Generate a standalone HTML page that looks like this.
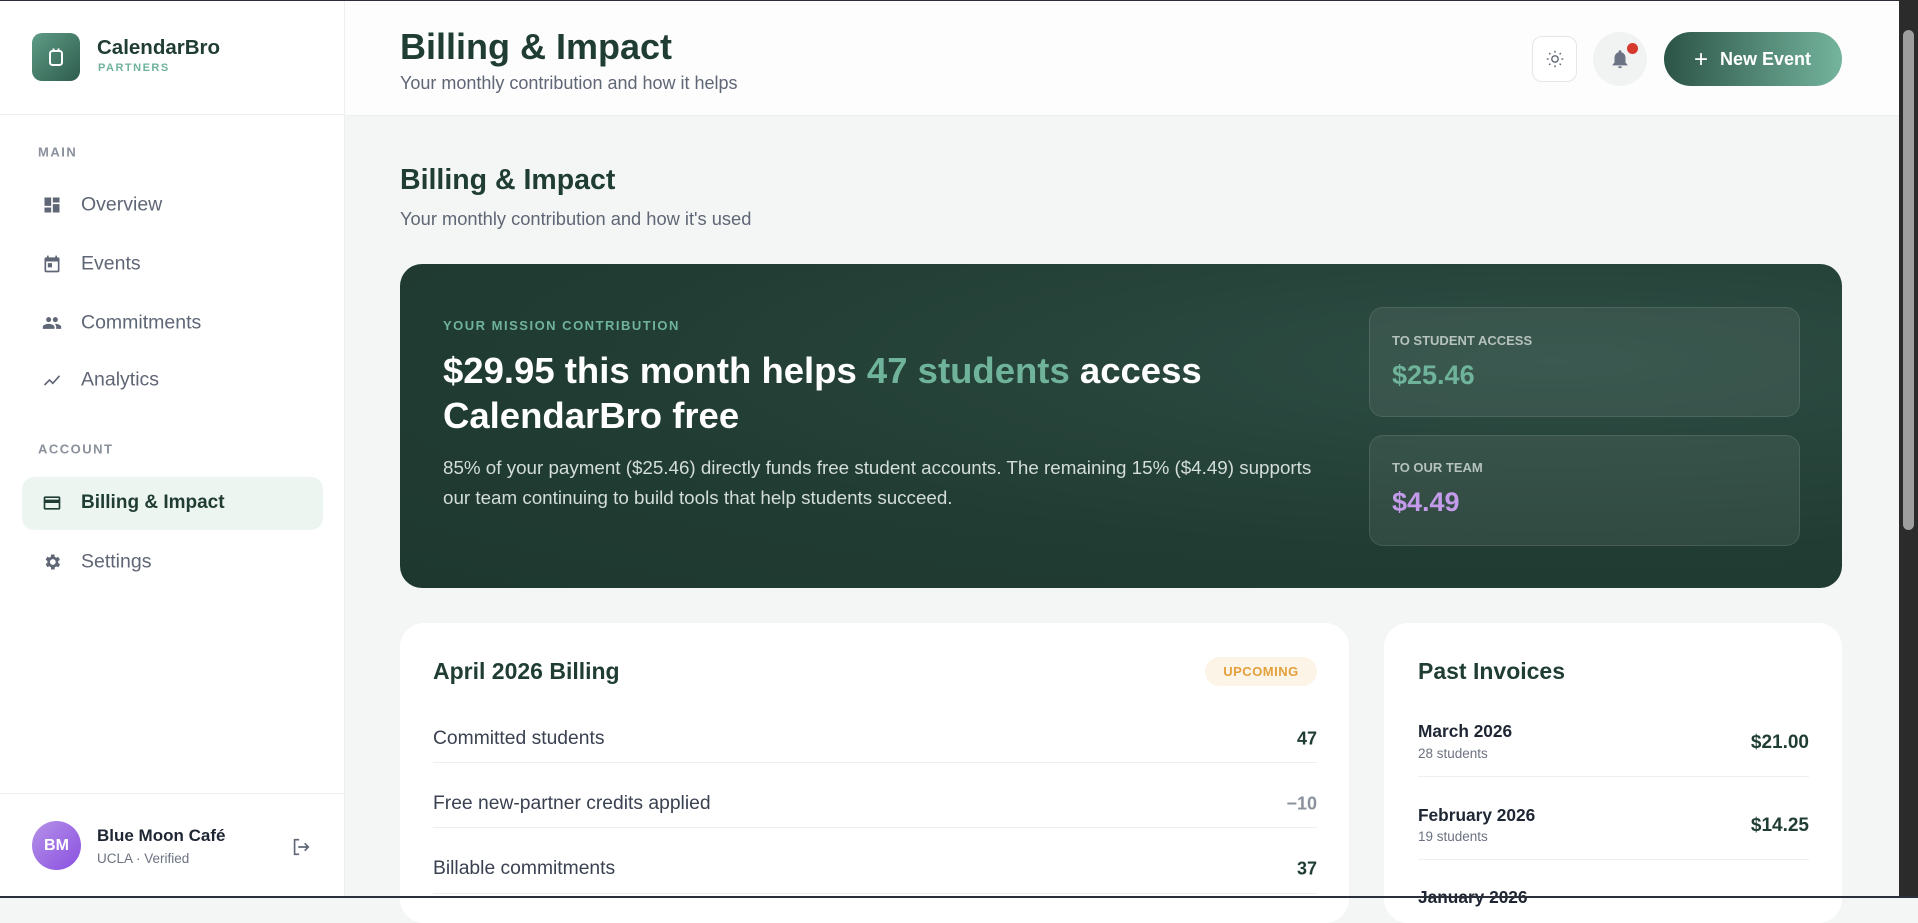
<!DOCTYPE html>
<html><head><meta charset="utf-8"><style>
*{box-sizing:border-box;margin:0;padding:0}
body{width:1918px;height:898px;overflow:hidden;font-family:"Liberation Sans",sans-serif;background:#f4f6f5;position:relative;color:#1f3d33}
.a{position:absolute;white-space:nowrap}
#top{left:0;top:0;width:1918px;height:1px;background:#2a2f3a}
#side{left:0;top:1px;width:345px;height:897px;background:#fff;border-right:1px solid #eef0ef}
#hdr{left:345px;top:1px;width:1554px;height:115px;background:#fdfdfd;border-bottom:1px solid #eef0ef}
.nav{left:81px;font-size:19.5px;color:#5f6675;transform:translateY(-50%)}
.ic{left:42px;width:20px;height:20px;transform:translateY(-50%)}
.lab{left:38px;font-size:13px;font-weight:bold;letter-spacing:1.5px;color:#8a909c;transform:translateY(-50%)}
.row{font-size:19.3px;color:#3a4150;transform:translateY(-50%)}
.val{font-size:18px;font-weight:bold;transform:translateY(-50%);text-align:right}
.hr{height:1px;background:#eef0ef}
</style></head><body>
<div class="a" id="top"></div>
<div class="a" id="side"></div>
<div class="a" id="hdr"></div>
<div class="a" style="left:32px;top:33px;width:48px;height:48px;border-radius:10px;background:linear-gradient(135deg,#5e9c86,#2e5c4c)"></div>
<svg class="a" style="left:44px;top:45px" width="24" height="24" viewBox="0 0 24 24"><rect x="6" y="6" width="12" height="14" rx="2.5" fill="none" stroke="#fff" stroke-width="2"/><rect x="8.5" y="3.5" width="2" height="3.5" fill="#fff"/><rect x="13.5" y="3.5" width="2" height="3.5" fill="#fff"/></svg>
<div class="a" style="left:97px;top:36px;font-size:20.5px;font-weight:bold;color:#1f3d33">CalendarBro</div>
<div class="a" style="left:98px;top:62px;font-size:11px;font-weight:bold;letter-spacing:1.5px;color:#6fb39a">PARTNERS</div>
<div class="a hr" style="left:0;top:114px;width:345px"></div>
<div class="a lab" style="top:152px">MAIN</div>
<svg class="a ic" style="top:205px" viewBox="0 0 24 24" fill="#5f6675"><path d="M3 13h8V3H3zm0 8h8v-6H3zm10 0h8V11h-8zm0-18v6h8V3z"/></svg>
<div class="a nav" style="top:205px">Overview</div>
<svg class="a ic" style="top:264px" viewBox="0 0 24 24" fill="#5f6675"><path d="M19 4h-1V2h-2v2H8V2H6v2H5a2 2 0 0 0-2 2v14a2 2 0 0 0 2 2h14a2 2 0 0 0 2-2V6a2 2 0 0 0-2-2zm0 16H5V9h14zM7 11h5v5H7z"/></svg>
<div class="a nav" style="top:264px">Events</div>
<svg class="a ic" style="top:323px" viewBox="0 0 24 24" fill="#5f6675"><path d="M16 11c1.7 0 3-1.3 3-3s-1.3-3-3-3-3 1.3-3 3 1.3 3 3 3zm-8 0c1.7 0 3-1.3 3-3S9.7 5 8 5 5 6.3 5 8s1.3 3 3 3zm0 2c-2.3 0-7 1.2-7 3.5V19h14v-2.5C15 14.2 10.3 13 8 13zm8 0h-1c1.2.8 2 2 2 3.5V19h6v-2.5c0-2.3-4.7-3.5-7-3.5z"/></svg>
<div class="a nav" style="top:323px">Commitments</div>
<svg class="a ic" style="top:380px" viewBox="0 0 24 24" fill="none" stroke="#5f6675" stroke-width="2"><path d="M3 18l6-6 4 4 8-9"/></svg>
<div class="a nav" style="top:380px">Analytics</div>
<div class="a lab" style="top:449px">ACCOUNT</div>
<div class="a" style="left:22px;top:477px;width:301px;height:53px;border-radius:12px;background:#edf5f1"></div>
<svg class="a ic" style="top:503px" viewBox="0 0 24 24" fill="#1f3d33"><path d="M20 4H4a2 2 0 0 0-2 2v12a2 2 0 0 0 2 2h16a2 2 0 0 0 2-2V6a2 2 0 0 0-2-2zm0 14H4v-6h16zm0-10H4V6h16z"/></svg>
<div class="a nav" style="top:503px;color:#1f3d33;font-weight:bold;font-size:19px">Billing &amp; Impact</div>
<svg class="a ic" style="top:562px" viewBox="0 0 24 24" fill="#5f6675"><path d="M19.4 13a7.5 7.5 0 0 0 0-2l2.1-1.6-2-3.5-2.5 1a7 7 0 0 0-1.7-1L15 3h-4l-.4 2.7a7 7 0 0 0-1.7 1l-2.5-1-2 3.5L6.5 11a7.5 7.5 0 0 0 0 2l-2.1 1.6 2 3.5 2.5-1a7 7 0 0 0 1.7 1L11 21h4l.4-2.7a7 7 0 0 0 1.7-1l2.5 1 2-3.5zM13 15.5a3.5 3.5 0 1 1 0-7 3.5 3.5 0 0 1 0 7z"/></svg>
<div class="a nav" style="top:562px">Settings</div>
<div class="a hr" style="left:0;top:793px;width:345px"></div>
<div class="a" style="left:32px;top:821px;width:49px;height:49px;border-radius:50%;background:linear-gradient(135deg,#b592e8,#8a4fe0);color:#fff;font-weight:bold;font-size:16px;text-align:center;line-height:49px">BM</div>
<div class="a" style="left:97px;top:826px;font-size:17px;font-weight:bold;color:#1e2633">Blue Moon Café</div>
<div class="a" style="left:97px;top:851px;font-size:13.5px;color:#6b7280">UCLA · Verified</div>
<svg class="a" style="left:290px;top:836px" width="22" height="22" viewBox="0 0 24 24" fill="none" stroke="#5f6675" stroke-width="1.8"><path d="M10 4H5v16h5M9 12h11M16 8l4 4-4 4"/></svg>
<div class="a" style="left:400px;top:26px;font-size:36px;font-weight:bold;color:#1f3d33">Billing &amp; Impact</div>
<div class="a" style="left:400px;top:73px;font-size:18px;color:#5f6675">Your monthly contribution and how it helps</div>
<div class="a" style="left:1532px;top:36px;width:45px;height:46px;border:1px solid #e4e7e6;border-radius:10px;background:#fff"></div>
<svg class="a" style="left:1544px;top:48px" width="22" height="22" viewBox="0 0 24 24" fill="none" stroke="#5f6675" stroke-width="1.5"><circle cx="12" cy="12" r="3.5"/><path d="M12 3v2M12 19v2M3 12h2M19 12h2M5.6 5.6l1.4 1.4M17 17l1.4 1.4M5.6 18.4L7 17M17 7l1.4-1.4"/></svg>
<div class="a" style="left:1593px;top:32px;width:54px;height:54px;border-radius:50%;background:#f1f3f2"></div>
<svg class="a" style="left:1609px;top:47px" width="22" height="24" viewBox="0 0 24 24" fill="#6b7385"><path d="M12 22a2 2 0 0 0 2-2h-4a2 2 0 0 0 2 2zm6-6v-5c0-3.1-1.6-5.6-4.5-6.3V4a1.5 1.5 0 0 0-3 0v.7C7.6 5.4 6 7.9 6 11v5l-2 2v1h16v-1z"/></svg>
<div class="a" style="left:1627px;top:43px;width:11px;height:11px;border-radius:50%;background:#d63a2f"></div>
<div class="a" style="left:1664px;top:32px;width:178px;height:54px;border-radius:27px;background:linear-gradient(90deg,#2c5447,#74b49d);color:#fff;font-size:18px;font-weight:bold;line-height:54px;padding-left:30px"><span style="font-weight:normal;font-size:24px;vertical-align:-2px;margin-right:12px">+</span>New Event</div>
<div class="a" style="left:400px;top:164px;font-size:28.5px;font-weight:bold;color:#1f3d33">Billing &amp; Impact</div>
<div class="a" style="left:400px;top:208px;font-size:18.3px;color:#5f6675">Your monthly contribution and how it's used</div>
<div class="a" style="left:400px;top:264px;width:1442px;height:324px;border-radius:22px;background:radial-gradient(ellipse at 80% 30%,#2d4d43,#213c33 60%,#1e3830)"></div>
<div class="a" style="left:443px;top:318px;font-size:13px;font-weight:bold;letter-spacing:1.5px;color:#6fb39a">YOUR MISSION CONTRIBUTION</div>
<div class="a" style="left:443px;top:348px;font-size:36.5px;font-weight:bold;color:#fff;line-height:45px">$29.95 this month helps <span style="color:#6fb39a">47 students</span> access<br>CalendarBro free</div>
<div class="a" style="left:443px;top:453px;font-size:18.8px;color:#d3ddd9;line-height:30px">85% of your payment ($25.46) directly funds free student accounts. The remaining 15% ($4.49) supports<br>our team continuing to build tools that help students succeed.</div>
<div class="a" style="left:1369px;top:307px;width:431px;height:110px;border-radius:14px;background:rgba(255,255,255,.07);border:1px solid rgba(255,255,255,.1)"></div>
<div class="a" style="left:1392px;top:333px;font-size:13px;font-weight:bold;color:#b5c2bd">TO STUDENT ACCESS</div>
<div class="a" style="left:1392px;top:360px;font-size:27px;font-weight:bold;color:#6fb39a">$25.46</div>
<div class="a" style="left:1369px;top:435px;width:431px;height:111px;border-radius:14px;background:rgba(255,255,255,.07);border:1px solid rgba(255,255,255,.1)"></div>
<div class="a" style="left:1392px;top:460px;font-size:13px;font-weight:bold;color:#b5c2bd">TO OUR TEAM</div>
<div class="a" style="left:1392px;top:487px;font-size:27px;font-weight:bold;color:#c39bea">$4.49</div>
<div class="a" style="left:400px;top:623px;width:949px;height:300px;border-radius:24px;background:#fff"></div>
<div class="a" style="left:433px;top:658px;font-size:23px;font-weight:bold;color:#1f3d33">April 2026 Billing</div>
<div class="a" style="left:1205px;top:657px;width:112px;height:29px;border-radius:15px;background:#fdf4e8;color:#e3a03c;font-size:13px;font-weight:bold;text-align:center;line-height:29px;letter-spacing:.5px">UPCOMING</div>
<div class="a row" style="left:433px;top:739px">Committed students</div>
<div class="a val" style="right:601px;top:739px">47</div>
<div class="a hr" style="left:433px;top:762px;width:884px"></div>
<div class="a row" style="left:433px;top:804px">Free new-partner credits applied</div>
<div class="a val" style="right:601px;top:804px;color:#8a909c">−10</div>
<div class="a hr" style="left:433px;top:827px;width:884px"></div>
<div class="a row" style="left:433px;top:869px">Billable commitments</div>
<div class="a val" style="right:601px;top:869px">37</div>
<div class="a hr" style="left:433px;top:893px;width:884px"></div>
<div class="a" style="left:1384px;top:623px;width:458px;height:300px;border-radius:24px;background:#fff"></div>
<div class="a" style="left:1418px;top:658px;font-size:23px;font-weight:bold;color:#1f3d33">Past Invoices</div>
<div class="a" style="left:1418px;top:721px;font-size:17.3px;font-weight:bold;color:#1e2633">March 2026</div>
<div class="a" style="left:1418px;top:746px;font-size:13.5px;color:#6b7280">28 students</div>
<div class="a val" style="right:109px;top:743px;font-size:19px">$21.00</div>
<div class="a hr" style="left:1418px;top:776px;width:391px"></div>
<div class="a" style="left:1418px;top:805px;font-size:17.3px;font-weight:bold;color:#1e2633">February 2026</div>
<div class="a" style="left:1418px;top:829px;font-size:13.5px;color:#6b7280">19 students</div>
<div class="a val" style="right:109px;top:826px;font-size:19px">$14.25</div>
<div class="a hr" style="left:1418px;top:859px;width:391px"></div>
<div class="a" style="left:1418px;top:887px;font-size:17.3px;font-weight:bold;color:#1e2633">January 2026</div>
<div class="a" style="left:1899px;top:0;width:19px;height:898px;background:#2b2b2b"></div>
<div class="a" style="left:1903px;top:30px;width:11px;height:500px;border-radius:6px;background:#9e9e9e"></div>
<div class="a" style="left:0;top:896px;width:1918px;height:2px;background:#2a2f3a"></div>
</body></html>
